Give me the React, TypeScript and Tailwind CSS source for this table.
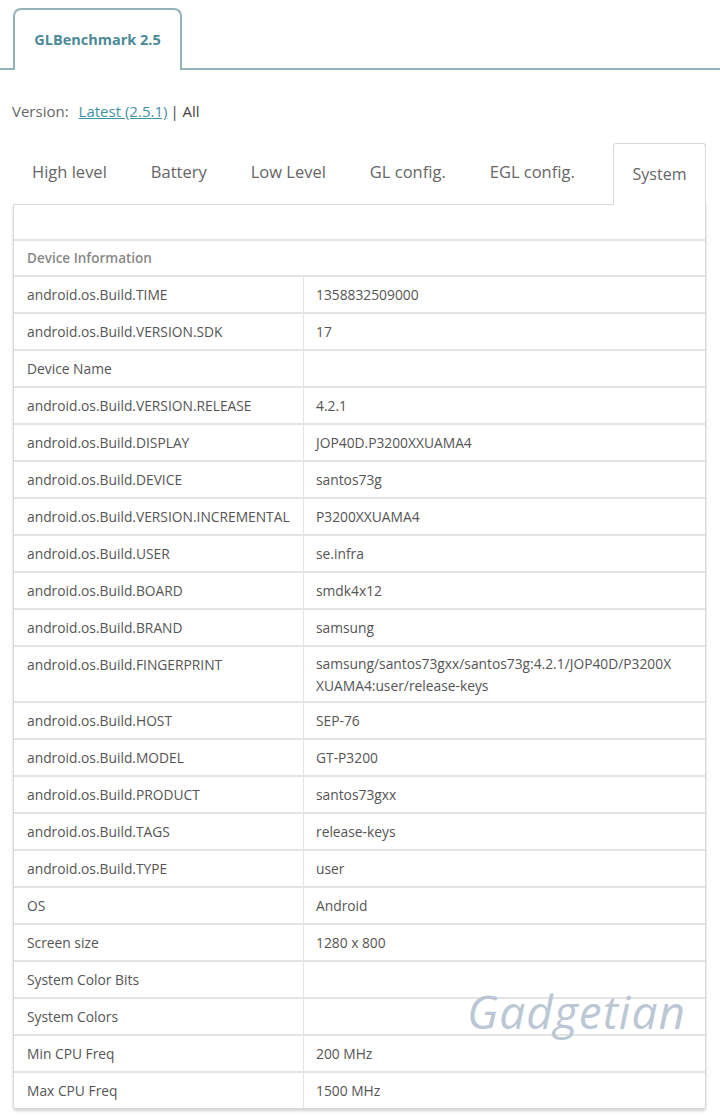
import React from 'react';

const rows: [string, string][] = [
  ["android.os.Build.TIME", "1358832509000"],
  ["android.os.Build.VERSION.SDK", "17"],
  ["Device Name", ""],
  ["android.os.Build.VERSION.RELEASE", "4.2.1"],
  ["android.os.Build.DISPLAY", "JOP40D.P3200XXUAMA4"],
  ["android.os.Build.DEVICE", "santos73g"],
  ["android.os.Build.VERSION.INCREMENTAL", "P3200XXUAMA4"],
  ["android.os.Build.USER", "se.infra"],
  ["android.os.Build.BOARD", "smdk4x12"],
  ["android.os.Build.BRAND", "samsung"],
  ["android.os.Build.FINGERPRINT", "samsung/santos73gxx/santos73g:4.2.1/JOP40D/P3200X\nXUAMA4:user/release-keys"],
  ["android.os.Build.HOST", "SEP-76"],
  ["android.os.Build.MODEL", "GT-P3200"],
  ["android.os.Build.PRODUCT", "santos73gxx"],
  ["android.os.Build.TAGS", "release-keys"],
  ["android.os.Build.TYPE", "user"],
  ["OS", "Android"],
  ["Screen size", "1280 x 800"],
  ["System Color Bits", ""],
  ["System Colors", ""],
  ["Min CPU Freq", "200 MHz"],
  ["Max CPU Freq", "1500 MHz"],
];

const tabs = ["High level", "Battery", "Low Level", "GL config.", "EGL config."];

function App() {
  return (
    <div className="w-[720px] h-[1119px] bg-white text-[#555] overflow-hidden" style={{ fontFamily: '"Open Sans", sans-serif' }}>
      {/* top tab bar */}
      <div className="h-[70px] border-b-[2px] border-[#93b3b8] flex items-end pl-[13px]">
        <div className="w-[169px] h-[62px] -mb-[2px] bg-white border-[2px] border-b-0 border-[#93b3b8] rounded-t-[8px] flex items-center justify-center">
          <span className="text-[14.5px] font-bold text-[#4c8a98]">GLBenchmark 2.5</span>
        </div>
      </div>

      <div className="pl-[12px] mt-[30px] h-[22px] text-[15px] flex items-center">
        <span className="text-[#666]">Version:</span>
        <span className="ml-[10px] text-[#3f93a5] underline">Latest (2.5.1)</span>
        <span className="ml-[3px] text-[#444]">| All</span>
      </div>

      <div className="ml-[13px] w-[693px] mt-[20px]">
        <div className="flex items-end h-[62px] gap-[6px]">
          {tabs.map(t => (
            <div key={t} className="px-[19px] h-[60px] pb-[4px] flex items-center text-[16.5px] text-[#666]">{t}</div>
          ))}
          <div className="ml-auto w-[93px] h-[62px] -mb-[1px] bg-white border border-b-0 border-[#d8d8d8] rounded-t-[3px] flex items-center justify-center text-[16px] text-[#666] relative z-10 pb-[2px]">
            System
          </div>
        </div>

        <div className="relative border border-[#d8d8d8] rounded-b-[3px] shadow-[0_2px_3px_rgba(0,0,0,0.18)] text-[13.8px]">
          <div className="h-[36px] border-b-[2px] border-[#e4e4e4]"></div>
          <div className="h-[36px] border-b-[2px] border-[#e4e4e4] px-[13px] flex items-center font-semibold text-[#888] text-[13.5px]">Device Information</div>
          {rows.map(([k, v], i) => (
            <div key={k} className={`flex ${i < rows.length - 1 ? "border-b-[2px] border-[#e4e4e4]" : ""}`}>
              <div className="w-[290px] shrink-0 border-r border-[#e4e4e4] px-[13px] py-[6px] leading-[23px] text-[#555]">{k}</div>
              <div className={`flex-1 px-[12px] ${v.includes("\n") ? "pt-[6px] pb-[4px] leading-[22px]" : "py-[6px] leading-[23px]"} text-[#555] whitespace-pre-line`}>{v}</div>
            </div>
          ))}
          <div className="absolute right-[19px] bottom-[62px] text-[46px] italic text-[#bcc7d6] tracking-[1px] pointer-events-none">Gadgetian</div>
        </div>
      </div>
    </div>
  );
}

export default App;
